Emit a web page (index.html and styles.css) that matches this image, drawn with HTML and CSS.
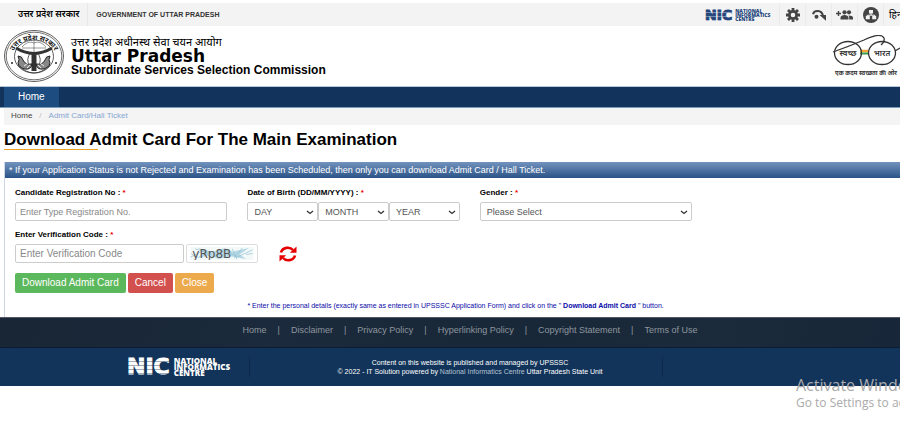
FILE: index.html
```html
<!DOCTYPE html>
<html lang="en">
<head>
<meta charset="utf-8">
<title>Download Admit Card</title>
<meta name="viewport" content="width=device-width, initial-scale=1">
<link rel="stylesheet" href="styles.css">
</head>
<body>
<div class="page">
  <div class="topbar">
    <span class="topbar-hindi" lang="hi">उत्तर प्रदेश सरकार</span>
    <span class="topbar-gov">GOVERNMENT OF UTTAR PRADESH</span>
    <div class="tools">
      <a class="nic nic-small" href="#"><span class="nic-mark">NIC</span><span class="nic-name">NATIONAL<br>INFORMATICS<br>CENTRE</span></a>
      <a class="tool" href="#" aria-label="Settings"><svg width="14" height="14" viewBox="0 0 14 14"><g stroke="#444" fill="none"><circle cx="7" cy="7" r="3.7" stroke-width="2.8"/><path stroke-width="2.8" d="M7 0v2.4M7 11.6V14M0 7h2.4M11.6 7H14M2 2l1.8 1.8M10.2 10.2 12 12M12 2l-1.8 1.8M3.8 10.2 2 12"/></g></svg></a>
      <a class="tool" href="#" aria-label="Skip to content"><svg width="14" height="12" viewBox="0 0 14 12"><path d="M1 5.2C2 1 9.8.4 11 7" fill="none" stroke="#444" stroke-width="2"/><path d="M7.5 6H14v5.8z" fill="#444"/><circle cx="4.5" cy="7.7" r="2" fill="#444"/></svg></a>
      <a class="tool" href="#" aria-label="Social media"><svg width="17" height="12" viewBox="0 0 17 12"><g fill="#444"><circle cx="8.5" cy="3.3" r="2.1"/><circle cx="13" cy="3.3" r="2.1"/><path d="M4.5 10.5V8.6c0-3.4 8-3.4 8 0v1.9zM13.2 10.5V8.3c0-.8-.3-1.4-.7-1.9 2.3-.1 4.5.7 4.5 2.3v1.8z"/></g><path d="M0 4.5h5M2.5 2v5" stroke="#444" stroke-width="1.4"/></svg></a>
      <a class="tool" href="#" aria-label="Site map"><svg width="16" height="16" viewBox="0 0 16 16"><circle cx="8" cy="8" r="8" fill="#444"/><path d="M8 6v2.2M4.5 10V8.2h7V10" stroke="#f2f2f2" fill="none"/><path d="M6 3h4v3.5H6zM2.8 8.8h4v3.4h-4zM9.2 8.8h4v3.4h-4z" fill="#f2f2f2"/></svg></a>
      <a class="tool lang" href="#" lang="hi">हिन्दी</a>
    </div>
  </div>

  <header class="masthead">
    <svg class="emblem" width="60" height="52" viewBox="0 0 60 52" role="img" aria-label="Emblem of Uttar Pradesh">
      <defs><path id="arc" d="M8.500 31C4.500 3 55.500 3 51.500 31"/></defs>
      <g fill="none" stroke="#333">
        <ellipse cx="30" cy="26" rx="29.500" ry="25.500" stroke-width=".8"/>
        <ellipse cx="30" cy="26" rx="27.800" ry="23.800" stroke-width=".7"/>
        <ellipse cx="30" cy="26.500" rx="19.500" ry="16.500" stroke-width=".8"/>
        <path d="M18 17q6-7 12-4 6-3 12 4M30 10v13M18 18h24" stroke-width=".5"/>
        <path d="M12 18Q20 23 30 23.500 40 23 48 18" stroke-width="3"/>
        <path d="M30 23v18" stroke-width="5"/>
        <path d="M27 23q-6 5-1 15M33 23q6 5 1 15" stroke-width=".8"/>
      </g>
      <g fill="#888" stroke="#222" stroke-width="1">
        <path d="M14 26q4 0 5 4 2 5 9 4-1 6-7 5-6-1-7-6 2-3 0-7zM46 26q-4 0-5 4-2 5-9 4 1 6 7 5 6-1 7-6-2-3 0-7z"/>
        <path d="M17 25l3 3M43 25l-3 3M20 36l4-3M40 36l-4-3M23 38l3-3M37 38l-3-3" fill="none" stroke="#eee"/>
      </g>
      <path d="M14 35q16 16 32 0" fill="none" stroke="#333" stroke-width=".8"/>
      <circle cx="8" cy="33" r="1" fill="#222"/><circle cx="52" cy="33" r="1" fill="#222"/>
      <text class="emblem-text" lang="hi"><textPath href="#arc" startOffset="50%" text-anchor="middle">उत्तर प्रदेश सरकार</textPath></text>
    </svg>
    <div class="org">
      <span class="org-hindi" lang="hi">उत्तर प्रदेश अधीनस्थ सेवा चयन आयोग</span>
      <strong class="org-state">Uttar Pradesh</strong>
      <strong class="org-name">Subordinate Services Selection Commission</strong>
    </div>
    <svg class="swachh" width="68" height="42" viewBox="0 0 68 42" role="img" aria-label="Swachh Bharat">
      <path d="M28 16h8" stroke="#f3a637" stroke-width="2.500"/><path d="M28 18.500h8" stroke="#3b9a48" stroke-width="2"/>
      <g fill="none" stroke="#333" stroke-width="1.300"><ellipse cx="16" cy="18" rx="13.500" ry="11.500"/><ellipse cx="50" cy="18" rx="13.500" ry="11.500"/><path d="M1 17Q18 11 32 5 49-3 52 3q1 4-3 7M63 16l5-3"/></g>
      <text x="16" y="21" text-anchor="middle" class="lens">स्वच्छ</text><text x="50" y="21" text-anchor="middle" class="lens">भारत</text>
      <text x="34" y="40" text-anchor="middle" class="motto">एक कदम स्वच्छता की ओर</text>
    </svg>
  </header>

  <nav class="mainnav"><a href="#">Home</a></nav>
  <nav class="crumbs" aria-label="Breadcrumb"><a href="#">Home</a><span class="slash">/</span><span class="current">Admit Card/Hall Ticket</span></nav>

  <main>
    <h1>Download Admit Card For The Main Examination</h1>
    <section class="panel">
      <h2>* If your Application Status is not Rejected and Examination has been Scheduled, then only you can download Admit Card / Hall Ticket.</h2>
      <form class="form">
        <div class="field">
          <label for="reg">Candidate Registration No : <i>*</i></label>
          <input id="reg" type="text" placeholder="Enter Type Registration No.">
        </div>
        <div class="field">
          <label for="day">Date of Birth (DD/MM/YYYY) : <i>*</i></label>
          <div class="dates">
            <span class="select"><select id="day"><option>DAY</option></select><svg width="8" height="5" viewBox="0 0 8 5"><path d="M1 1l3 2.500L7 1"/></svg></span>
            <span class="select"><select aria-label="Month"><option>MONTH</option></select><svg width="8" height="5" viewBox="0 0 8 5"><path d="M1 1l3 2.500L7 1"/></svg></span>
            <span class="select"><select aria-label="Year"><option>YEAR</option></select><svg width="8" height="5" viewBox="0 0 8 5"><path d="M1 1l3 2.500L7 1"/></svg></span>
          </div>
        </div>
        <div class="field">
          <label for="gender">Gender : <i>*</i></label>
          <span class="select"><select id="gender"><option>Please Select</option></select><svg width="8" height="5" viewBox="0 0 8 5"><path d="M1 1l3 2.500L7 1"/></svg></span>
        </div>
        <div class="field wide">
          <label for="code">Enter Verification Code : <i>*</i></label>
          <div class="verify">
            <input id="code" type="text" placeholder="Enter Verification Code">
            <svg class="captcha" width="68" height="13" viewBox="0 0 68 14" role="img" aria-label="Verification code">
              <rect width="68" height="14" fill="#f3f8f9"/>
              <path d="M8 1l16 4 13-4 8 4 18-4-10 7 7 5-17-3-13 3-9-4-14 3 7-6z" fill="#b5d8e5"/>
              <path d="M0 11l14-7 9 8 15-9 12 8L67 3M5 2l13 4M45 2l5 11M56 1l-9 11M1 7l5 4M60 8l7-1" fill="none" stroke="#8dbdce" stroke-width=".7"/>
              <text x="2" y="12">yRp8B</text>
            </svg>
            <button class="refresh" type="button" aria-label="Refresh code"><svg width="18" height="16" viewBox="0 0 18 16"><path d="M2 6.500C3.500 1 11 .5 14 4M16 9.500C14.500 15 7 15.500 4 12" fill="none" stroke="#e60000" stroke-width="2.600"/><path d="M17.500.5v6.200h-6.600zM.5 15.500V9.300h6.600z" fill="#e60000"/></svg></button>
          </div>
        </div>
        <div class="actions">
          <button class="btn green" type="submit">Download Admit Card</button>
          <button class="btn red" type="reset">Cancel</button>
          <button class="btn orange" type="button">Close</button>
        </div>
        <p class="note">* Enter the personal details (exactly same as entered in UPSSSC Application Form) and click on the " <b>Download Admit Card</b> " button.</p>
      </form>
    </section>
  </main>

  <footer>
    <ul class="links">
      <li><a href="#">Home</a></li><li><a href="#">Disclaimer</a></li><li><a href="#">Privacy Policy</a></li><li><a href="#">Hyperlinking Policy</a></li><li><a href="#">Copyright Statement</a></li><li><a href="#">Terms of Use</a></li>
    </ul>
    <div class="credits">
      <a class="nic" href="#"><span class="nic-mark">NIC</span><span class="nic-name">NATIONAL<br>INFORMATICS<br>CENTRE</span></a>
      <p>Content on this website is published and managed by UPSSSC<br>© 2022 - IT Solution powered by <a href="#">National Informatics Centre</a> Uttar Pradesh State Unit</p>
    </div>
  </footer>
  <div class="activate"><span class="activate-title">Activate Windows</span><span>Go to Settings to activate Windows.</span></div>
</div>
</body>
</html>
```

FILE: styles.css
```css
* { box-sizing: border-box; }
body {
  margin: 0;
  background: #fff;
  color: #000;
  font: 10px/12px "Liberation Sans", "Noto Sans", sans-serif;
}
a { color: inherit; text-decoration: none; }
input, select, button { font: inherit; }
.page { position: relative; overflow: hidden; min-height: 100vh; padding-top: 3px; }

.topbar {
  display: flex;
  align-items: center;
  height: 23px;
  padding-left: 18px;
  background: #f3f3f3;
  white-space: nowrap;
}
.topbar-hindi { padding-right: 8px; margin-right: 8px; border-right: 1px solid #e8e8e8; font-size: 9px; line-height: 23px; font-weight: 600; }
.topbar-gov { color: #333; font-size: 7px; font-weight: 700; }
.tools { display: flex; align-items: center; width: 195px; margin-left: auto; overflow: hidden; }
.tools .nic { width: 74px; flex: none; }
.tool {
  display: flex;
  align-items: center;
  justify-content: center;
  flex: none;
  width: 26px;
  height: 23px;
  border-left: 1px solid #ebebeb;
}
.lang { justify-content: flex-start; padding-left: 5px; font-size: 10px; }

.nic { display: flex; align-items: center; gap: 4px; color: #fff; --stripe: #12345a; }
.nic-mark {
  position: relative;
  font: 700 22px/18px "DejaVu Sans", sans-serif;
  -webkit-text-stroke: 1px currentColor;
}
.nic-mark::after {
  content: "";
  position: absolute;
  inset: 0;
  background: repeating-linear-gradient(transparent 0 3px, var(--stripe) 3px 4px);
  opacity: .4;
}
.nic-name { font: 800 8px/6px "Open Sans", sans-serif; }
.nic-small { color: #24467c; --stripe: #f3f3f3; gap: 3px; }
.nic-small .nic-mark { font-size: 14px; line-height: 12px; }
.nic-small .nic-name { font-size: 5px; line-height: 4px; }

.masthead { display: flex; align-items: center; height: 60px; padding-left: 4px; }
.emblem { flex: none; }
.emblem-text { font: 700 7px "Noto Sans", sans-serif; fill: #222; }
.org { display: flex; flex-direction: column; margin-left: 7px; white-space: nowrap; }
.org-hindi { font-size: 11px; line-height: 14px; }
.org-state { font: 700 17px/15px "DejaVu Sans", sans-serif; }
.org-name { font-size: 12px; line-height: 13px; }
.swachh { flex: none; margin-left: auto; }
.lens { font: 600 8px "Noto Sans", sans-serif; fill: #333; }
.motto { font: 700 6px "Noto Sans", sans-serif; fill: #333; }

.mainnav {
  display: flex;
  height: 22px;
  padding-left: 4px;
  border-top: 1px solid #b8c8d8;
  border-bottom: 1px solid #7d9cba;
  background: #12335b;
}
.mainnav a { padding: 0 14px; background: #1d4c80; color: #fff; line-height: 20px; }
.crumbs {
  height: 17px;
  margin-left: 4px;
  padding-left: 7px;
  background: #f4f4f4;
  color: #444;
  font-size: 8px;
  line-height: 16px;
}
.slash { margin: 0 7px; color: #bbb; }
.current { color: #86a5d2; }

h1 {
  position: relative;
  margin: 5px 0 12px 4px;
  padding-bottom: 1px;
  font-size: 17px;
  line-height: 19px;
}
h1::after { content: ""; position: absolute; left: 0; bottom: 0; width: 94px; height: 1px; background: #eaa227; }
.panel { margin-left: 4px; border-left: 1px solid #cdd6e4; }
h2 {
  margin: 0;
  padding-left: 4px;
  background: linear-gradient(#7393be, #2b5387);
  color: #fff;
  font-size: 9px;
  line-height: 16px;
  font-weight: 400;
}
.form {
  display: grid;
  grid-template-columns: repeat(3, 24%);
  column-gap: 20px;
  padding: 9px 0 5px 10px;
}
.field { height: 42px; }
.field label { display: block; height: 15px; font-size: 8px; line-height: 12px; font-weight: 700; }
.field i { color: #e00; font-style: normal; }
.wide { grid-column: span 2; height: 44px; }
input, select {
  display: block;
  width: 100%;
  height: 19px;
  margin: 0;
  padding: 0 4px;
  border: 1px solid #ccc;
  border-radius: 2px;
  background: #fff;
  color: #555;
  font-size: 9px;
}
input::placeholder { color: #888; opacity: 1; }
select { appearance: none; padding-left: 6px; }
.dates { display: grid; grid-template-columns: repeat(3, 1fr); }
.select { position: relative; display: block; }
.select svg { position: absolute; right: 4px; top: 8px; pointer-events: none; fill: none; stroke: #333; stroke-width: 1.3px; }
.verify { display: flex; align-items: center; }
.verify input { width: 169px; font-size: 10px; }
.captcha { box-sizing: content-box; margin-left: 2px; padding: 2px 1px; border: 1px solid #ddd; border-radius: 2px; }
.captcha text { font: 13px "DejaVu Sans", sans-serif; fill: #555; }
.refresh { display: flex; margin-left: 21px; padding: 0; border: 0; background: none; }
.actions { display: flex; grid-column: 1 / -1; gap: 2px; }
.btn { height: 20px; padding: 0 7px; border: 0; border-radius: 2px; color: #fff; font-size: 10px; }
.green { background: #5cb85c; }
.red { background: #d2504d; }
.orange { background: #edaa4d; }
.note { grid-column: 2 / -1; margin: 7px 0 0; color: #0a0aa8; font-size: 7px; white-space: nowrap; }

footer { border-top: 1px solid #556; color: #fff; }
.links {
  display: flex;
  justify-content: center;
  height: 30px;
  margin: 0;
  padding: 0 0 0 40px;
  border-bottom: 1px solid #0b1c33;
  background: linear-gradient(100deg, #182635, #1b2a3c 30%, #182838 60%, #1b2b3b 80%, #172638);
  color: #8e969e;
  font-size: 9px;
  line-height: 24px;
  list-style: none;
}
.links li + li::before { content: "|"; margin: 0 11px; }
.credits {
  display: grid;
  grid-template-columns: 249px 46% 1fr;
  align-items: center;
  height: 38px;
  background: #12345a;
}
.credits .nic { padding-left: 127px; }
.credits p {
  margin: 0;
  padding: 1px 0 1px 28px;
  border: solid #0d2848;
  border-width: 0 1px;
  font-size: 7px;
  line-height: 9px;
  text-align: center;
}
.credits p a { color: #b5c2d0; }
.activate {
  position: absolute;
  left: calc(100% - 104px);
  top: 376px;
  display: flex;
  flex-direction: column;
  color: #aaa;
  font: 12px/17px "Open Sans", sans-serif;
  white-space: nowrap;
  pointer-events: none;
}
.activate-title { font-size: 16px; line-height: 18px; }
```
